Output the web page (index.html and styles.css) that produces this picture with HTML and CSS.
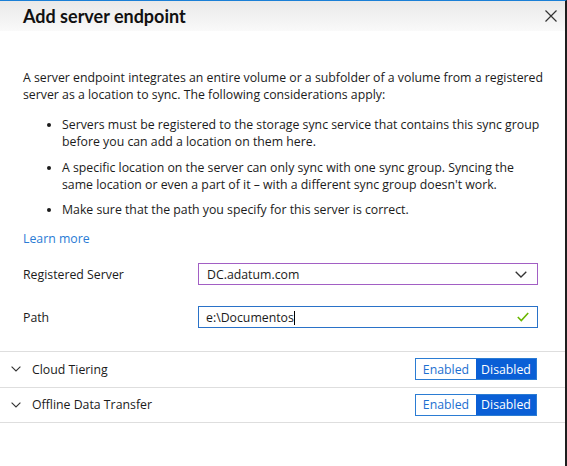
FILE: index.html
```html
<!DOCTYPE html>
<html lang="en">
<head>
<meta charset="utf-8">
<title>Add server endpoint</title>
<link rel="stylesheet" href="styles.css">
</head>
<body>
<div class="panel">
  <header class="head">
    <h1 class="title">Add server endpoint</h1>
    <button class="close" aria-label="Close">
      <svg width="12" height="12" viewBox="0 0 12 12"><path d="M0.5 0.5 L11.5 11.5 M11.5 0.5 L0.5 11.5" stroke="#333" stroke-width="1.2" fill="none"/></svg>
    </button>
  </header>
  <div class="content">
    <p class="intro">A server endpoint integrates an entire volume or a subfolder of a volume from a registered<br>server as a location to sync. The following considerations apply:</p>
    <ul class="considerations">
      <li>Servers must be registered to the storage sync service that contains this sync group<br>before you can add a location on them here.</li>
      <li>A specific location on the server can only sync with one sync group. Syncing the<br>same location or even a part of it – with a different sync group doesn't work.</li>
      <li>Make sure that the path you specify for this server is correct.</li>
    </ul>
    <a class="learn" href="#">Learn more</a>
    <div class="field">
      <label class="label">Registered Server</label>
      <div class="box select">
        <span class="value">DC.adatum.com</span>
        <svg class="chev" width="12" height="7" viewBox="0 0 12 7"><path d="M0.7 0.7 L6 6 L11.3 0.7" stroke="#333" stroke-width="1.3" fill="none"/></svg>
      </div>
    </div>
    <div class="field">
      <label class="label">Path</label>
      <div class="box input">
        <span class="value">e:\Documentos<span class="caret"></span></span>
        <svg class="check" width="12" height="10" viewBox="0 0 12 10"><path d="M0.8 5 L4.3 8.5 L11.2 1" stroke="#6bb700" stroke-width="1.6" fill="none"/></svg>
      </div>
    </div>
  </div>
  <div class="sections">
    <div class="section">
      <svg class="sec-chev" width="10" height="6" viewBox="0 0 10 6"><path d="M0.6 0.6 L5 5 L9.4 0.6" stroke="#333" stroke-width="1.1" fill="none"/></svg>
      <span class="sec-name">Cloud Tiering</span>
      <div class="toggle"><span class="opt">Enabled</span><span class="opt on">Disabled</span></div>
    </div>
    <div class="section">
      <svg class="sec-chev" width="10" height="6" viewBox="0 0 10 6"><path d="M0.6 0.6 L5 5 L9.4 0.6" stroke="#333" stroke-width="1.1" fill="none"/></svg>
      <span class="sec-name">Offline Data Transfer</span>
      <div class="toggle"><span class="opt">Enabled</span><span class="opt on">Disabled</span></div>
    </div>
  </div>
</div>
</body>
</html>
```
FILE: styles.css
```css
html, body {
  margin: 0;
  padding: 0;
  background: #fff;
}
body {
  font-family: "Open Sans", "Noto Sans", sans-serif;
  font-size: 12.3px;
  color: #1b1b1b;
}
.panel {
  width: 567px;
  height: 466px;
  box-sizing: border-box;
  border-top: 1px solid #1a7fd6;
  border-right: 2px solid #1e1e1e;
  display: flex;
  flex-direction: column;
  overflow: hidden;
}
.head {
  height: 30px;
  flex: none;
  display: flex;
  align-items: center;
  justify-content: space-between;
  padding: 0 8px 0 23px;
  background: linear-gradient(#e9e9e9, #ffffff 40px);
}
.title {
  margin: 0;
  font-family: "Lato", "Open Sans", sans-serif;
  font-size: 18px;
  font-weight: 700;
  color: #111;
}
.close {
  border: 0;
  background: none;
  padding: 0;
  width: 12px;
  height: 12px;
  display: flex;
}
.content {
  padding: 38px 0 0 23px;
}
.intro {
  margin: 0;
  line-height: 17px;
  white-space: nowrap;
}
.considerations {
  margin: 13px 0 0;
  padding: 0 0 0 39px;
  line-height: 17px;
  white-space: nowrap;
}
.considerations li {
  margin-bottom: 8.5px;
}
.considerations li:last-child {
  margin-bottom: 0;
}
.learn {
  display: block;
  width: max-content;
  margin-top: 12px;
  line-height: 17px;
  color: #2a7bd5;
  text-decoration: none;
}
.field {
  display: flex;
  align-items: center;
  margin-top: 16px;
  width: 515px;
}
.field + .field {
  margin-top: 21px;
}
.label {
  width: 175px;
}
.box {
  flex: 1;
  height: 22px;
  box-sizing: border-box;
  display: flex;
  align-items: center;
  justify-content: space-between;
  padding: 0 8px 0 8px;
}
.select {
  border: 1px solid #a25fc4;
}
.input {
  border: 1px solid #2a72c8;
  padding-left: 7px;
}
.chev {
  margin-right: 2px;
}
.caret {
  display: inline-block;
  width: 1px;
  height: 14px;
  background: #000;
  vertical-align: -3px;
}
.sections {
  margin-top: 23px;
  border-top: 1px solid #dedede;
}
.section {
  height: 34.5px;
  border-bottom: 1px solid #dedede;
  display: flex;
  align-items: center;
  padding: 0 28px 0 11px;
}
.sec-chev {
  margin-right: 11px;
}
.sec-name {
  flex: 1;
}
.toggle {
  display: flex;
  border: 1px solid #2b7cd3;
  height: 22px;
  box-sizing: border-box;
}
.opt {
  width: 60px;
  display: flex;
  align-items: center;
  justify-content: center;
  color: #1d6fd0;
  font-size: 12.3px;
}
.opt.on {
  background: #0a5fd6;
  color: #fff;
}
```
